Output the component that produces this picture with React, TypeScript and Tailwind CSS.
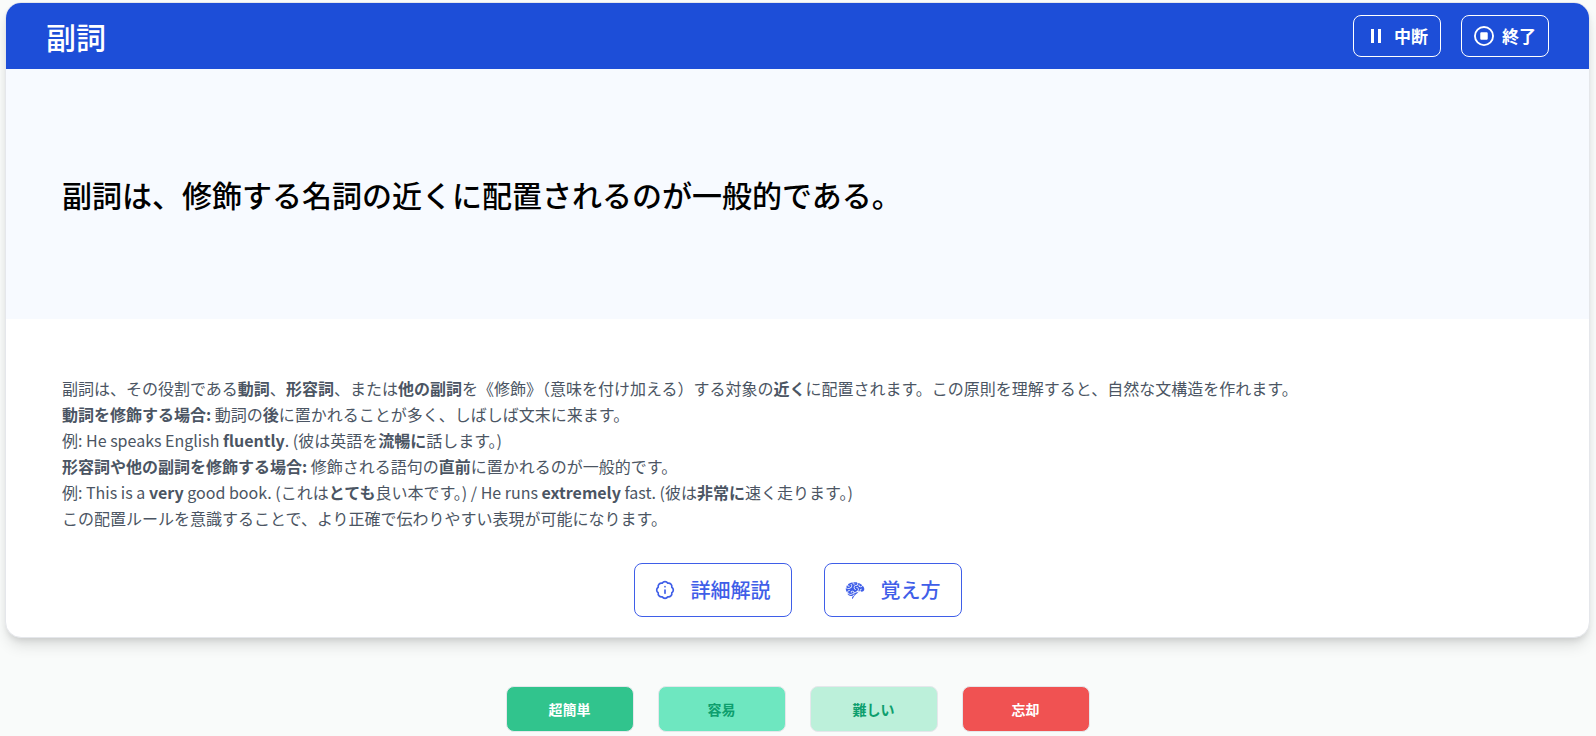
import type { ReactNode } from "react";
import { BadgeInfo } from "lucide-react";
import { GiBrain } from "react-icons/gi";
import { FaRegCircleStop } from "react-icons/fa6";

const RATINGS = [
  { label: "超簡単", className: "bg-[#31c48d] text-white" },
  { label: "容易", className: "bg-[#6ee7c0] text-[#0e9f6e]" },
  { label: "難しい", className: "bg-[#bcf0da] text-[#0e9f6e]" },
  { label: "忘却", className: "bg-[#f05252] text-white" },
];

function PauseIcon() {
  return (
    <svg viewBox="0 0 20 20" className="h-5 w-5" fill="currentColor" aria-hidden="true">
      <rect x="5" y="3" width="3" height="14" />
      <rect x="12" y="3" width="3" height="14" />
    </svg>
  );
}

function HeaderButton({ icon, label }: { icon: ReactNode; label: string }) {
  return (
    <button className="flex cursor-pointer items-center gap-2 rounded-lg border border-white px-3 py-2 text-[17px] leading-6 font-semibold text-white hover:bg-blue-600">
      {icon}
      {label}
    </button>
  );
}

function HelpButton({ icon, label }: { icon: ReactNode; label: string }) {
  return (
    <button className="flex cursor-pointer items-center gap-4 rounded-lg border border-[#3f5ee8] bg-white px-5 py-3 text-xl font-medium text-[#3f5ee8] hover:bg-blue-50">
      {icon}
      {label}
    </button>
  );
}

function Term({ children }: { children: ReactNode }) {
  return <strong className="font-semibold">{children}</strong>;
}

export default function App() {
  return (
    <div
      className="min-h-screen bg-[#f9fbfa] pt-[2px] pr-[6px] pb-1 pl-[5px] font-['Noto_Sans_CJK_JP',sans-serif]"
      lang="ja"
    >
      <main className="overflow-hidden rounded-2xl border border-[#e5e7eb] bg-white shadow-[0_10px_15px_-3px_rgba(0,0,0,0.12),0_4px_6px_-2px_rgba(0,0,0,0.1)]">
        <header className="flex items-center justify-between bg-[#1d4ed8] px-10 py-3">
          <h1 className="text-3xl font-medium text-white">副詞</h1>
          <div className="flex gap-5">
            <HeaderButton icon={<PauseIcon />} label="中断" />
            <HeaderButton icon={<FaRegCircleStop className="h-5 w-5" />} label="終了" />
          </div>
        </header>

        <section className="flex min-h-[250px] items-center bg-[#f7faff] px-14">
          <p className="text-3xl font-medium text-black">
            副詞は、修飾する名詞の近くに配置されるのが一般的である。
          </p>
        </section>

        <section className="px-14 pt-14 pb-5">
          <div className="text-base leading-relaxed text-[#4b5563]">
            <p>
              副詞は、その役割である<Term>動詞</Term>、<Term>形容詞</Term>
              、または<Term>他の副詞</Term>
              を《修飾》（意味を付け加える）する対象の<Term>近く</Term>
              に配置されます。この原則を理解すると、自然な文構造を作れます。
            </p>
            <p>
              <Term>動詞を修飾する場合:</Term> 動詞の<Term>後</Term>
              に置かれることが多く、しばしば文末に来ます。
            </p>
            <p>
              例: He speaks English <Term>fluently</Term>. (彼は英語を
              <Term>流暢に</Term>話します。)
            </p>
            <p>
              <Term>形容詞や他の副詞を修飾する場合:</Term> 修飾される語句の
              <Term>直前</Term>に置かれるのが一般的です。
            </p>
            <p>
              例: This is a <Term>very</Term> good book. (これは
              <Term>とても</Term>良い本です。) / He runs <Term>extremely</Term>{" "}
              fast. (彼は<Term>非常に</Term>速く走ります。)
            </p>
            <p>
              この配置ルールを意識することで、より正確で伝わりやすい表現が可能になります。
            </p>
          </div>

          <div className="mt-8 flex justify-center gap-8">
            <HelpButton icon={<BadgeInfo className="h-5 w-5" />} label="詳細解説" />
            <HelpButton icon={<GiBrain className="h-5 w-5" />} label="覚え方" />
          </div>
        </section>
      </main>

      <div className="mt-12 flex justify-center gap-6">
        {RATINGS.map((rating) => (
          <button
            key={rating.label}
            className={`w-32 cursor-pointer rounded-lg border border-[#e5e7eb] py-3 text-sm font-bold ${rating.className}`}
          >
            {rating.label}
          </button>
        ))}
      </div>
    </div>
  );
}
